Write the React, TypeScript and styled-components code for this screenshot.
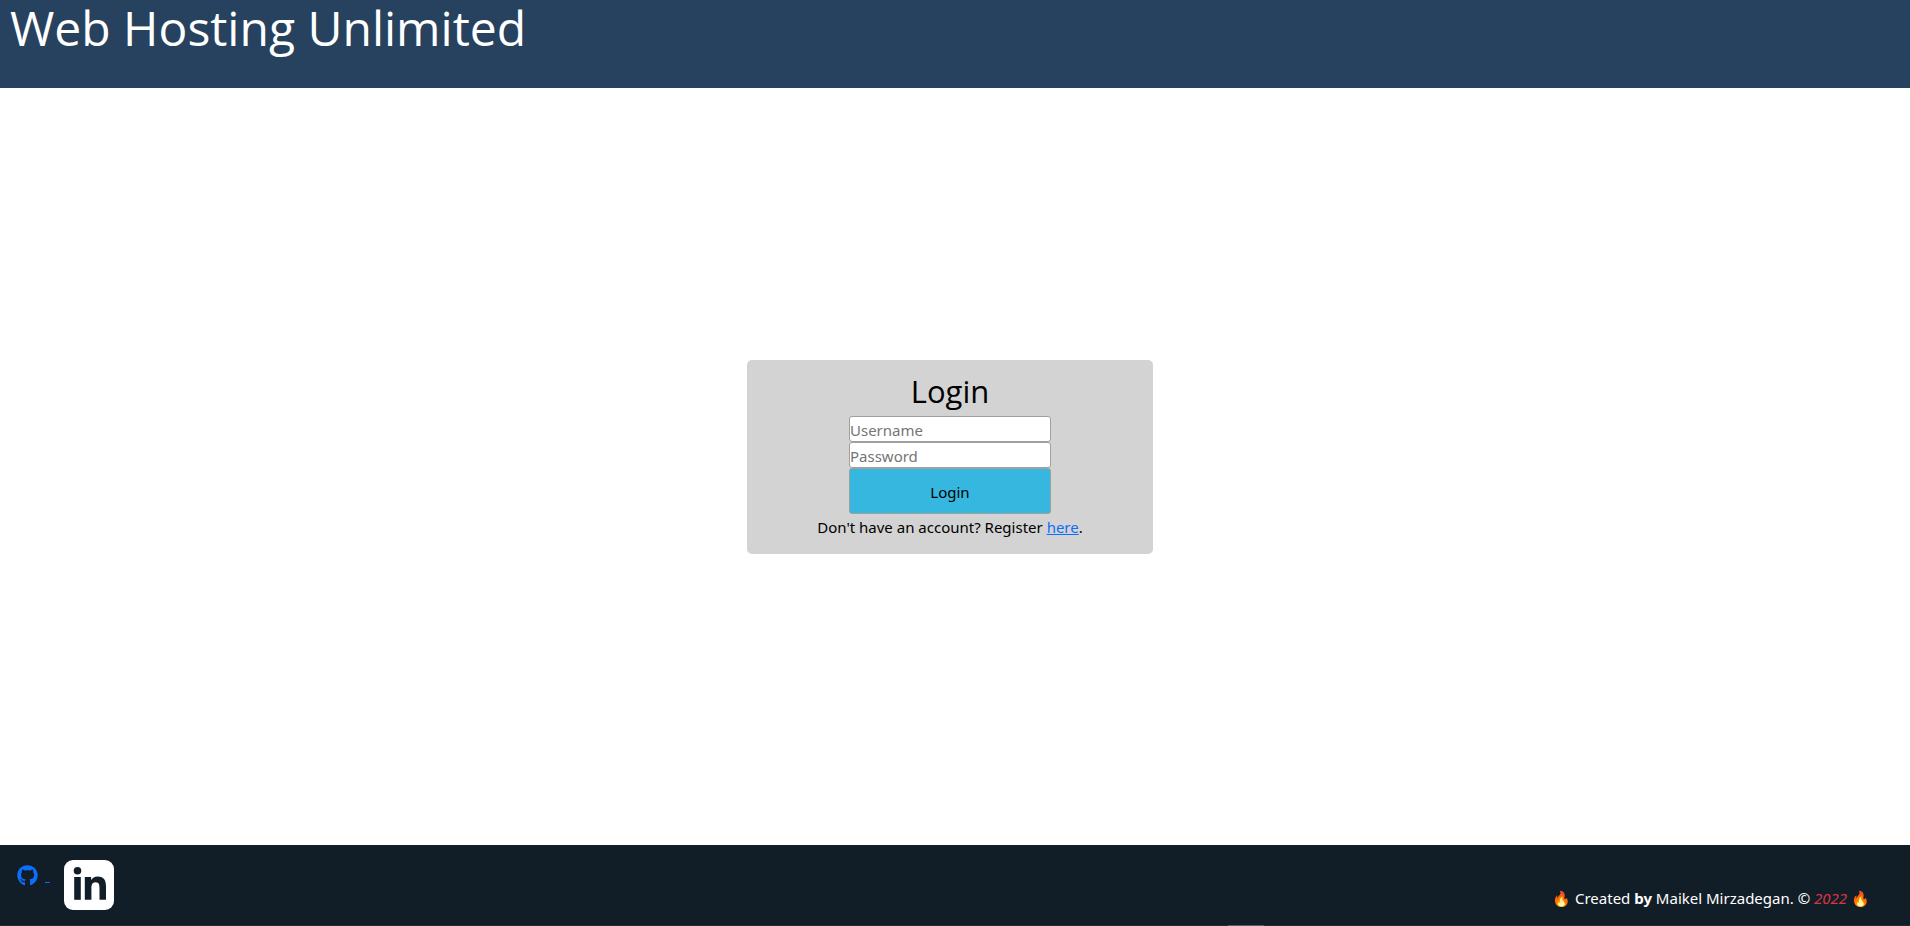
import React from "react";
import styled, { createGlobalStyle } from "styled-components";
import { FaGithub } from "react-icons/fa";

const GlobalStyle = createGlobalStyle`
  *, *::before, *::after { box-sizing: border-box; }
  body {
    margin: 0;
    background: #fff;
    color: #000;
    font: 15px/24px "Segoe UI", "Noto Sans", "Open Sans", sans-serif;
  }
`;

const Page = styled.div`
  display: flex;
  flex-direction: column;
  min-height: 100vh;
`;

const Header = styled.header`
  padding: 0 10px 32px;
  background: #26425e;
  color: #fff;
`;

const SiteTitle = styled.h1`
  margin: 0;
  font-family: "Segoe UI", "Open Sans", sans-serif;
  font-size: 48px;
  line-height: 56px;
  font-weight: 400;
`;

const Main = styled.main`
  flex: 1;
  display: flex;
  align-items: center;
  justify-content: center;
  padding: 0 10px 20px 0;
`;

const Card = styled.section`
  display: flex;
  flex-direction: column;
  align-items: center;
  width: 406px;
  padding: 12px 0 15px;
  border-radius: 5px;
  background: #d3d3d3;
`;

const CardTitle = styled.h2`
  margin: 0 0 6px;
  font-family: "Segoe UI", "Open Sans", sans-serif;
  font-size: 31px;
  line-height: 38px;
  font-weight: 400;
`;

const Form = styled.form`
  display: flex;
  flex-direction: column;
  width: 202px;
`;

const Field = styled.input`
  height: 26px;
  padding: 3px 0 0;
  border: 1px solid #a0a0a0;
  border-radius: 3px;
  background: #fff;
  font: inherit;
  &::placeholder { color: #757575; opacity: 1; }
`;

const SubmitButton = styled.button`
  height: 46px;
  padding: 2px 0 0;
  border: 1px solid #a0a0a0;
  border-radius: 3px;
  background: #35b7e0;
  color: #000;
  font: inherit;
`;

const Note = styled.p`
  margin: 1px 0 0;
`;

const RegisterLink = styled.a`
  color: #0d6efd;
`;

const Footer = styled.footer`
  display: flex;
  justify-content: space-between;
  align-items: flex-start;
  padding: 15px 40px 15px 17px;
  background: #121e27;
  color: #fff;
`;

const Social = styled.nav`
  display: flex;
  gap: 14px;
`;

const GithubLink = styled.a`
  display: flex;
  align-items: flex-start;
  gap: 7px;
  padding-top: 5px;
  color: #0d6efd;
  font-size: 18px;
  line-height: 18px;
`;

const LinkedinLink = styled.a`
  display: block;
  height: 50px;
`;

const Credit = styled.p`
  margin: 26px 0 0;
`;

const Year = styled.em`
  color: #dc3545;
`;

const ScrollTrack = styled.div`
  display: flex;
  height: 1px;
  padding-left: 64.3%;
  background: #2a2a33;
`;

const ScrollThumb = styled.div`
  width: 36px;
  background: #5c5c66;
`;

export default function App() {
  return (
    <Page>
      <GlobalStyle />
      <Header>
        <SiteTitle>Web Hosting Unlimited</SiteTitle>
      </Header>
      <Main>
        <Card>
          <CardTitle>Login</CardTitle>
          <Form onSubmit={(event) => event.preventDefault()}>
            <Field type="text" placeholder="Username" aria-label="Username" />
            <Field type="password" placeholder="Password" aria-label="Password" />
            <SubmitButton type="submit">Login</SubmitButton>
          </Form>
          <Note>
            Don't have an account? Register <RegisterLink href="#register">here</RegisterLink>.
          </Note>
        </Card>
      </Main>
      <Footer>
        <Social>
          <GithubLink href="#github" aria-label="GitHub">
            <FaGithub size={21} />
            <span>&nbsp;</span>
          </GithubLink>
          <LinkedinLink href="#linkedin" aria-label="LinkedIn">
            <svg width="50" height="50" viewBox="0 0 50 50">
              <rect width="50" height="50" rx="9" fill="#fff" />
              <g fill="#121e27">
                <circle cx="13.5" cy="10.7" r="3.8" />
                <rect x="10.2" y="17" width="6.6" height="22.8" />
                <path d="M20.8 17h6.3v3.1c1.2-2.2 3.500-3.700 6.700-3.700 6.400 0 8.200 4.200 8.200 10.200v13.200h-6.500V28.200c0-3-.2-6-3.900-6-3.500 0-4.200 2.800-4.200 5.800v11.800h-6.600z" />
              </g>
            </svg>
          </LinkedinLink>
        </Social>
        <Credit>
          🔥 Created <strong>by</strong> Maikel Mirzadegan. © <Year>2022</Year> 🔥
        </Credit>
      </Footer>
      <ScrollTrack>
        <ScrollThumb />
      </ScrollTrack>
    </Page>
  );
}
